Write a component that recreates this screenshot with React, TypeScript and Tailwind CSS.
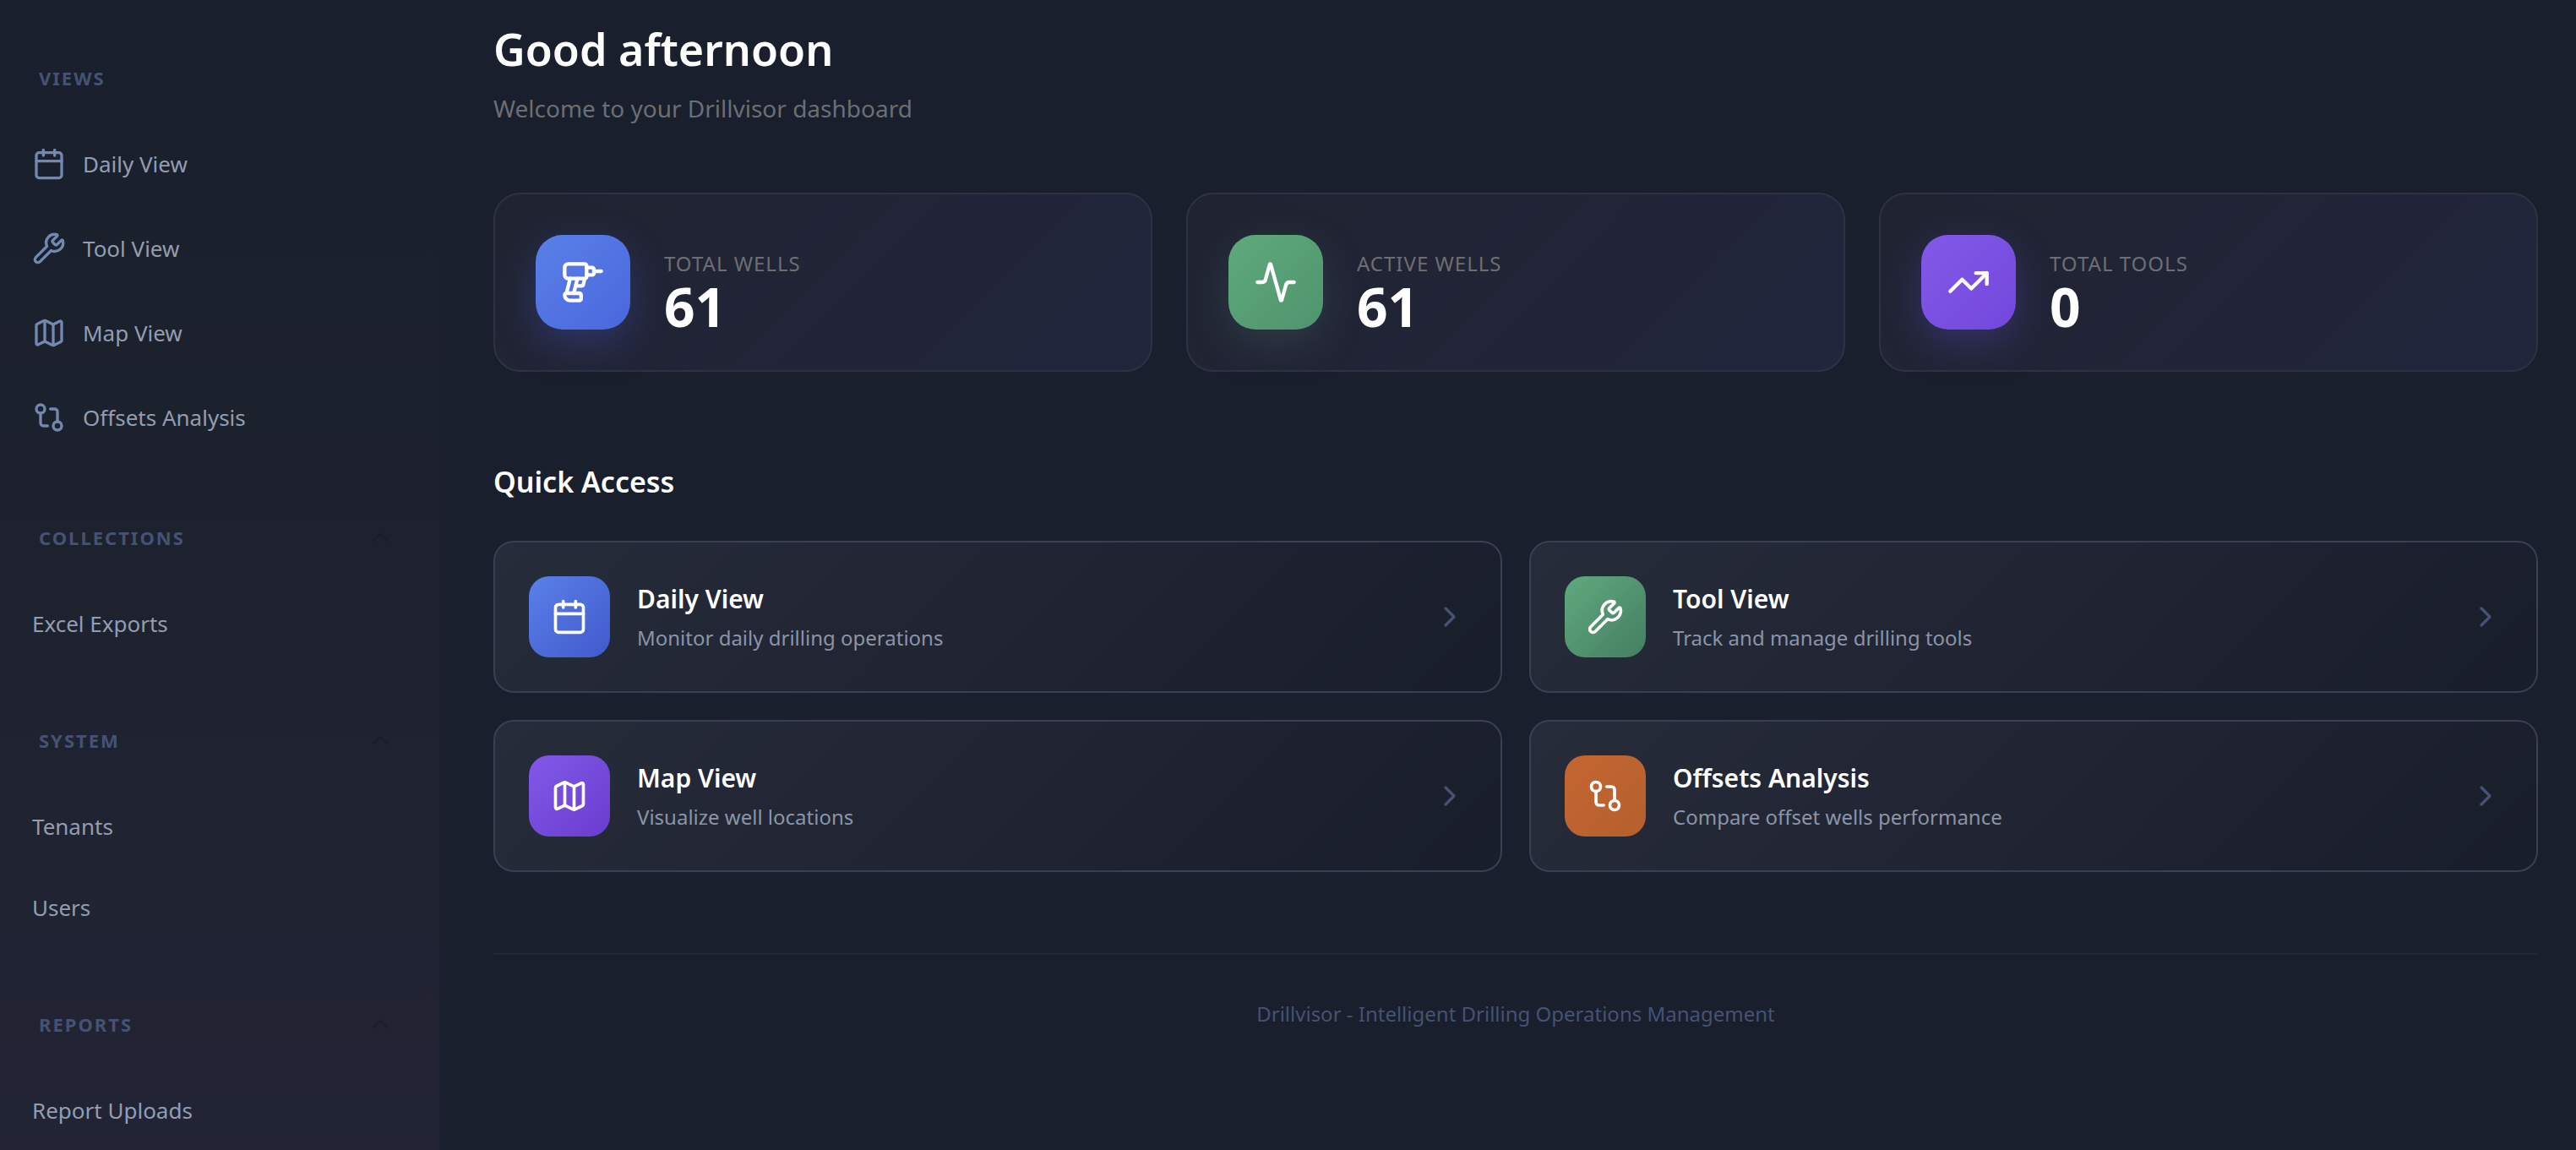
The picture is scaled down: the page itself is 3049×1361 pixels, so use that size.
import { useState } from 'react'
import type { ReactNode } from 'react'
import {
  Activity,
  Calendar,
  ChevronRight,
  ChevronUp,
  Drill,
  GitCompare,
  Map,
  TrendingUp,
  Wrench,
} from 'lucide-react'

const views = [
  { label: 'Daily View', icon: Calendar },
  { label: 'Tool View', icon: Wrench },
  { label: 'Map View', icon: Map },
  { label: 'Offsets Analysis', icon: GitCompare },
]

const groups = [
  { title: 'Collections', items: ['Excel Exports'] },
  { title: 'System', items: ['Tenants', 'Users'] },
  { title: 'Reports', items: ['Report Uploads'] },
]

const stats = [
  {
    label: 'Total Wells',
    value: 61,
    icon: Drill,
    style: 'from-[#5a80e8] to-[#4a67dd] shadow-[0_16px_48px_#4f5ee04d]',
  },
  {
    label: 'Active Wells',
    value: 61,
    icon: Activity,
    style: 'from-[#5fa97d] to-[#4f946d] shadow-[0_16px_48px_#5a7a8040]',
  },
  {
    label: 'Total Tools',
    value: 0,
    icon: TrendingUp,
    style: 'from-[#8259e8] to-[#7347dc] shadow-[0_16px_48px_#5f4fe04d]',
  },
]

const quickLinks = [
  {
    title: 'Daily View',
    text: 'Monitor daily drilling operations',
    icon: Calendar,
    style: 'from-[#5a80e8] to-[#4259cc]',
  },
  {
    title: 'Tool View',
    text: 'Track and manage drilling tools',
    icon: Wrench,
    style: 'from-[#5fa97d] to-[#457f63]',
  },
  {
    title: 'Map View',
    text: 'Visualize well locations',
    icon: Map,
    style: 'from-[#8259e8] to-[#6a3ccf]',
  },
  {
    title: 'Offsets Analysis',
    text: 'Compare offset wells performance',
    icon: GitCompare,
    style: 'from-[#c46631] to-[#b5602f]',
  },
]

function NavGroup({ title, children }: { title: string; children: ReactNode }) {
  const [open, setOpen] = useState(true)

  return (
    <section>
      <button
        onClick={() => setOpen(!open)}
        className="flex h-8 w-full items-center justify-between pl-2 text-[22px] font-bold uppercase tracking-[2px] text-[#465274]"
      >
        {title}
        <ChevronUp size={32} strokeWidth={1.5} className="text-[#1a1e2b]" />
      </button>
      {open && <nav className="mt-[38px] flex flex-col">{children}</nav>}
    </section>
  )
}

function Sidebar() {
  return (
    <aside className="flex w-[520px] shrink-0 flex-col bg-linear-to-b from-[#191f2c] via-[#1e222f] to-[#222435] pl-[38px] pr-[54px] pt-19">
      <section className="mb-19">
        <h2 className="pl-2 text-[22px] leading-8 font-bold uppercase tracking-[2px] text-[#465274]">
          Views
        </h2>
        <nav className="mt-9 flex flex-col">
          {views.map(({ label, icon: Icon }) => (
            <a key={label} href="#" className="flex h-25 items-center gap-5 text-[26px] text-[#949db0]">
              <Icon size={40} className="text-[#7388b0]" />
              {label}
            </a>
          ))}
        </nav>
      </section>
      <div className="flex flex-col gap-[74px]">
        {groups.map((group) => (
          <NavGroup key={group.title} title={group.title}>
            {group.items.map((item) => (
              <a key={item} href="#" className="flex h-24 items-center text-[26px] text-[#949db0]">
                {item}
              </a>
            ))}
          </NavGroup>
        ))}
      </div>
    </aside>
  )
}

export default function App() {
  return (
    <div className="flex h-screen overflow-hidden bg-[#191f2c] font-['Noto_Sans',sans-serif]">
      <Sidebar />

      <main className="min-w-0 flex-1 pl-16 pr-[45px] pt-5">
        <h1 className="text-[52px] leading-[76px] font-semibold text-white">Good afternoon</h1>
        <p className="mt-2.5 text-[28px] leading-11 text-[#6d6e74]">Welcome to your Drillvisor dashboard</p>

        <div className="mt-[78px] grid grid-cols-3 gap-10">
          {stats.map(({ label, value, icon: Icon, style }) => (
            <div
              key={label}
              className="flex items-center gap-10 rounded-[32px] border-2 border-[#2e3244] bg-linear-135 from-[#202431] via-[#222437] to-[#20263d] p-12"
            >
              <div className={`flex size-28 items-center justify-center rounded-[32px] bg-linear-135 text-white ${style}`}>
                <Icon size={52} />
              </div>
              <div className="pt-2.5">
                <div className="text-[24px] leading-12 uppercase tracking-[1px] text-[#6d6e74]">{label}</div>
                <div className="text-[64px] leading-[54px] font-bold text-white">{value}</div>
              </div>
            </div>
          ))}
        </div>

        <h2 className="mt-[106px] text-[34px] leading-12 font-semibold text-white">Quick Access</h2>
        <div className="mt-[46px] grid grid-cols-2 gap-8">
          {quickLinks.map(({ title, text, icon: Icon, style }) => (
            <a
              key={title}
              href="#"
              className="flex items-center gap-8 rounded-3xl border-2 border-[#3a4054] bg-linear-135 from-[#262c39] via-[#212433] to-[#191e2b] p-10"
            >
              <div className={`flex size-24 items-center justify-center rounded-3xl bg-linear-135 text-white ${style}`}>
                <Icon size={44} />
              </div>
              <div className="flex-1">
                <div className="text-[30px] leading-11 font-semibold text-white">{title}</div>
                <div className="mt-1.5 text-[24px] leading-9 text-[#8b94a8]">{text}</div>
              </div>
              <ChevronRight size={40} className="text-[#465274]" />
            </a>
          ))}
        </div>

        <footer className="mt-24 border-t-2 border-[#222835] pt-[50px] text-center text-[24px] leading-10 text-[#465274]">
          Drillvisor - Intelligent Drilling Operations Management
        </footer>
      </main>
    </div>
  )
}
